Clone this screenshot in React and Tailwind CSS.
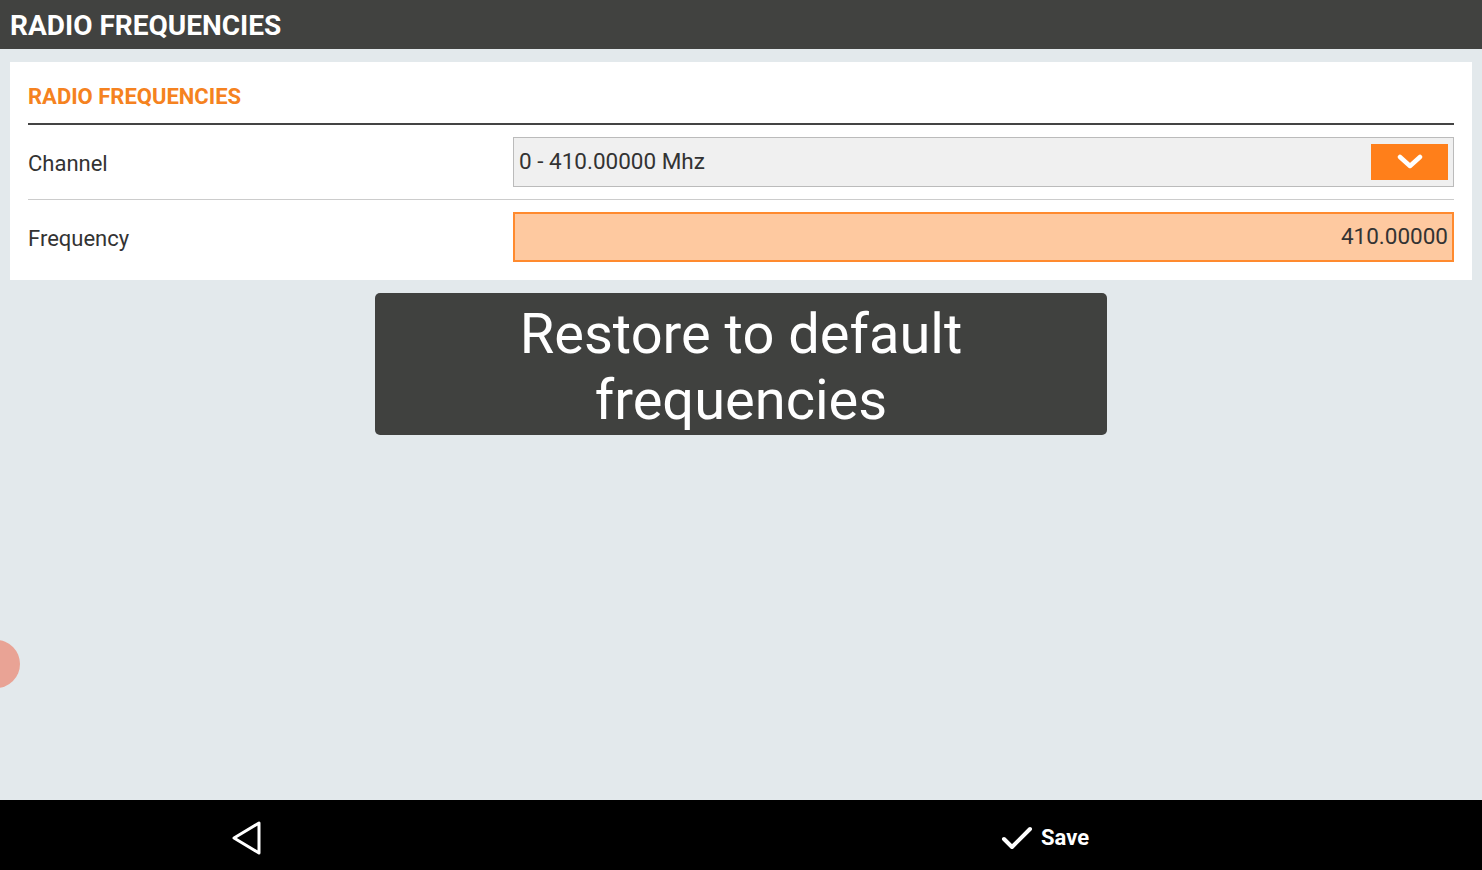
import React from "react";

export default function App() {
  return (
    <div className="w-[1482px] h-[870px] flex flex-col bg-[#e3e9ec] overflow-hidden relative" style={{ fontFamily: "Roboto, 'Noto Sans', sans-serif" }}>
      <div className="h-[49px] bg-[#414240] flex items-center px-[10px] shrink-0">
        <span className="text-white font-bold text-[28px] leading-none tracking-[0px] pt-[2px]">RADIO FREQUENCIES</span>
      </div>
      <div className="flex-1 flex flex-col pt-[13px] px-[10px]">
        <div className="bg-white px-[18px] pb-[18px]">
          <div className="h-[63px] flex items-center border-b-2 border-[#444444]">
            <span className="text-[#f58220] font-bold text-[22px] pt-[8px]">RADIO FREQUENCIES</span>
          </div>
          <div className="h-[75px] flex items-center border-b border-[#cccccc]">
            <span className="w-[485px] text-[22px] text-[#333333] pt-[2px]">Channel</span>
            <div className="flex-1 h-[50px] bg-[#f0f0f0] border border-[#bbbbbb] flex items-center pl-[5px] pr-[5px]">
              <span className="flex-1 text-[22.5px] text-[#333333]">0 - 410.00000 Mhz</span>
              <div className="w-[77px] h-[36px] bg-[#ff7f1a] flex items-center justify-center">
                <svg width="26" height="16" viewBox="0 0 26 16">
                  <path d="M3 3 L13 12 L23 3" fill="none" stroke="white" strokeWidth="4.5" strokeLinecap="round" strokeLinejoin="round" />
                </svg>
              </div>
            </div>
          </div>
          <div className="h-[62px] flex items-end">
            <span className="w-[485px] text-[22px] text-[#333333] pb-[7px]">Frequency</span>
            <div className="flex-1 h-[50px] bg-[#fec9a0] border-2 border-[#ff8a2e] flex items-center justify-end pr-[4px]">
              <span className="text-[22.5px] text-[#333333]">410.00000</span>
            </div>
          </div>
        </div>
        <div className="flex justify-center pt-[13px]">
          <div className="w-[732px] h-[142px] bg-[#40413f] rounded-[5px] flex items-center justify-center">
            <span className="text-white text-[56px] leading-[66px] text-center pt-[5px]">Restore to default<br />frequencies</span>
          </div>
        </div>
      </div>
      <div className="absolute left-[-28px] top-[640px] w-[48px] h-[48px] rounded-full bg-[#e9a395]"></div>
      <div className="h-[70px] bg-black shrink-0 flex items-center pt-[5px]">
        <div className="w-[494px] flex justify-center">
          <svg width="34" height="36" viewBox="0 0 34 36">
            <path d="M29 3 L29 33 L4 18 Z" fill="none" stroke="white" strokeWidth="3" strokeLinejoin="round" />
          </svg>
        </div>
        <div className="flex-1 flex items-center pl-[507px] gap-[8px]">
          <svg width="32" height="26" viewBox="0 0 32 26">
            <path d="M3 14 L11 22 L29 4" fill="none" stroke="white" strokeWidth="4" strokeLinecap="round" strokeLinejoin="round" />
          </svg>
          <span className="text-white font-bold text-[22px]">Save</span>
        </div>
      </div>
    </div>
  );
}
